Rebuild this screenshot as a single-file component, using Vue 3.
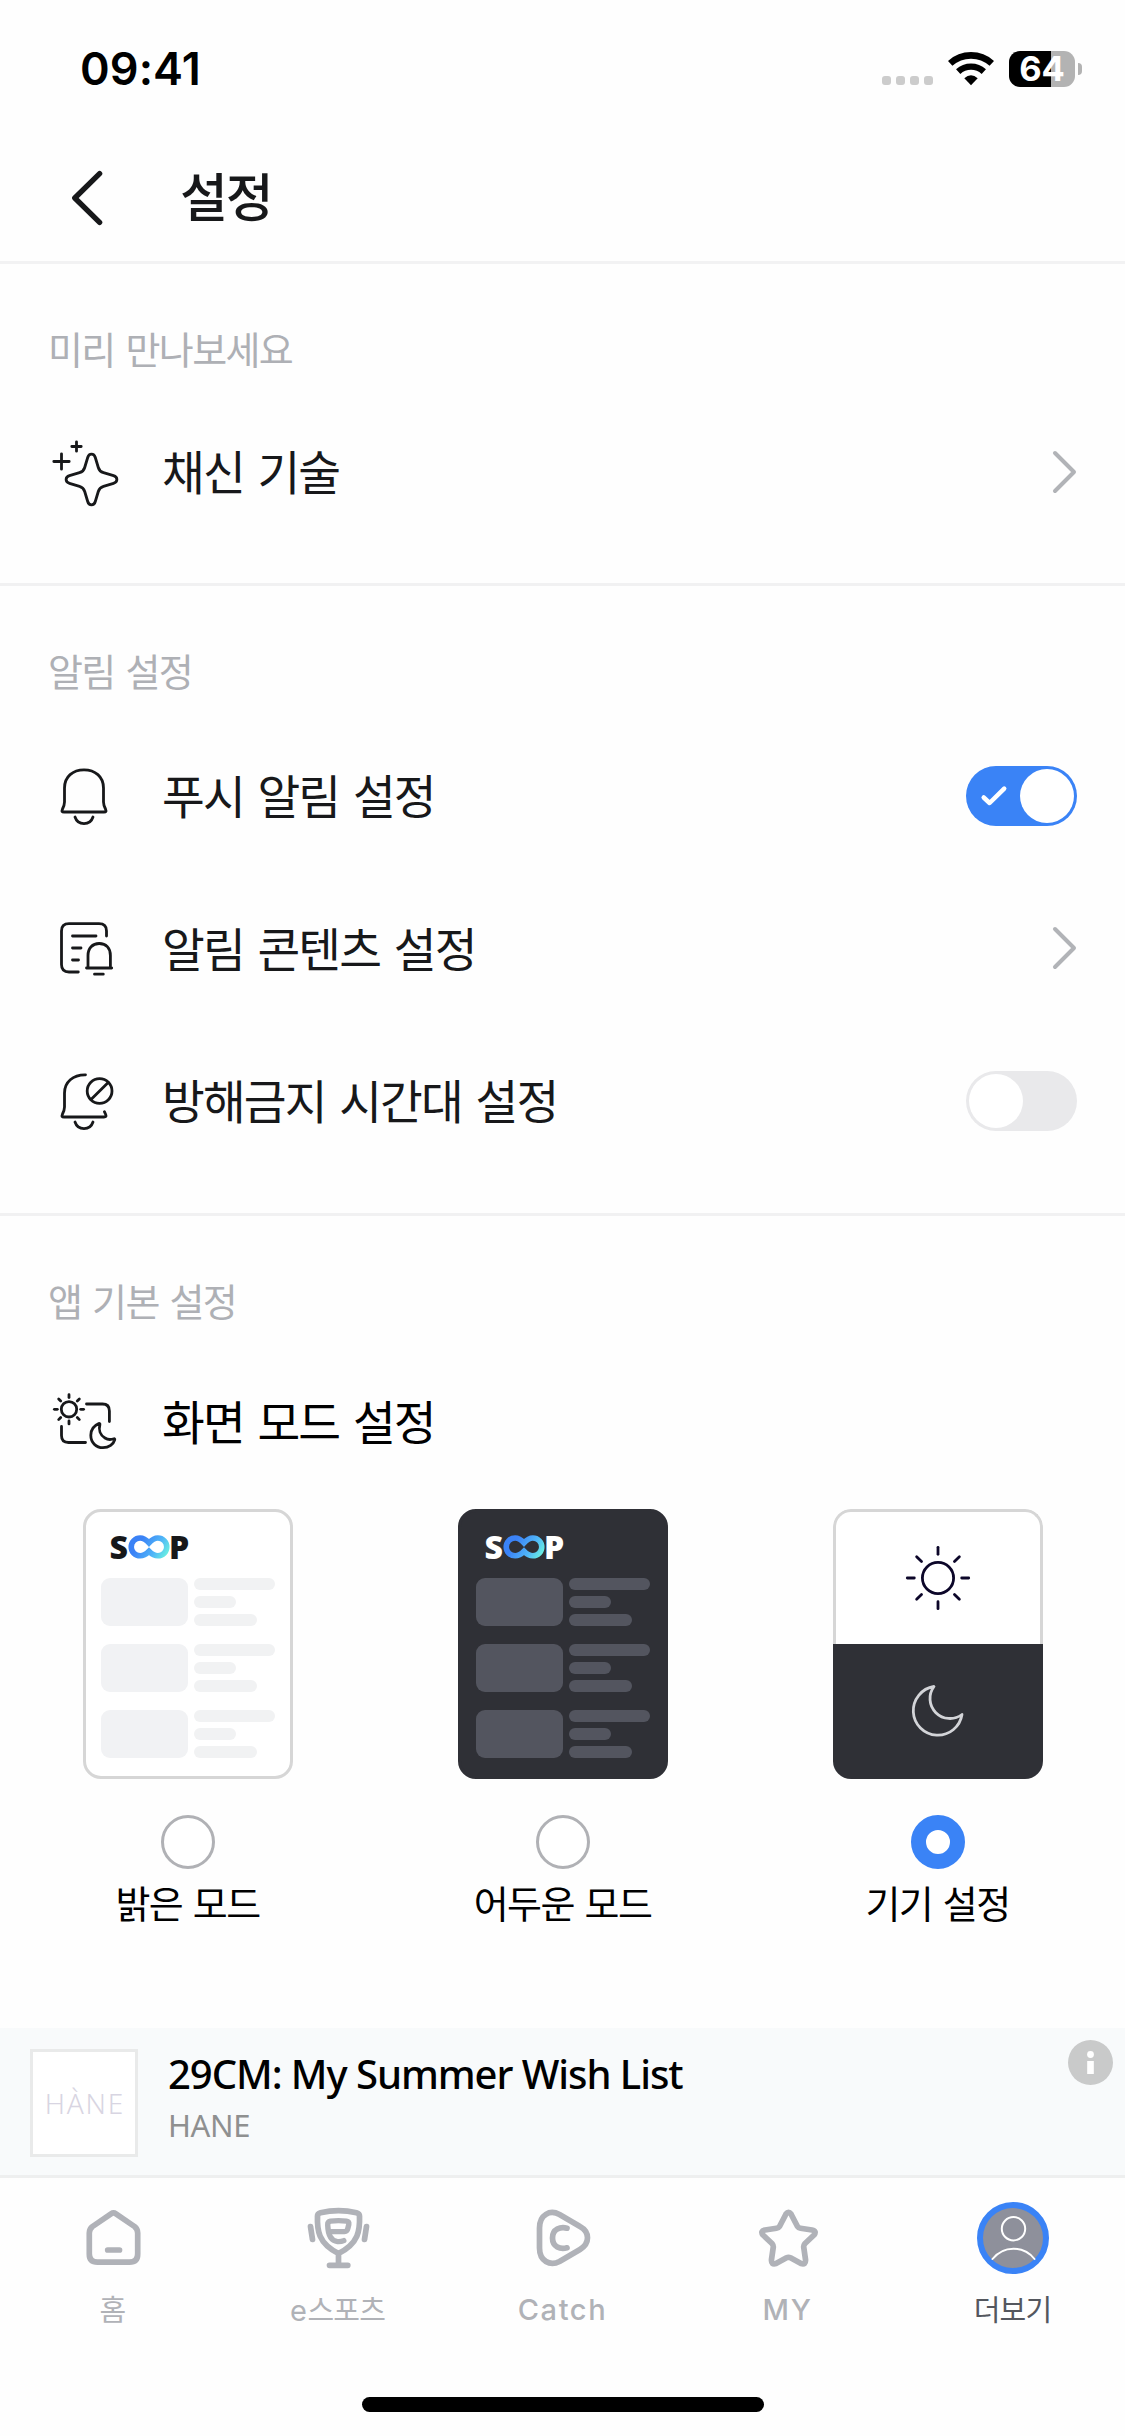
<script setup>
import { ref } from 'vue'

const pushOn = ref(true)
const quietOn = ref(false)
const mode = ref('device')

const modes = [
  { id: 'light', label: '밝은 모드' },
  { id: 'dark', label: '어두운 모드' },
  { id: 'device', label: '기기 설정' },
]
const rays = [0, 45, 90, 135, 180, 225, 270, 315]
</script>

<template>
  <div class="screen">
    <div class="status">
      <span class="clock">09:41</span>
      <div class="indicators">
        <div class="dots"><i v-for="n in 4" :key="n"></i></div>
        <svg class="wifi" width="46" height="34" viewBox="948 52 46 34">
          <path d="M950.2 63.4 A31 31 0 0 1 991.8 63.4" fill="none" stroke="#000" stroke-width="6.6" />
          <path d="M958.2 71.6 A19 19 0 0 1 983.8 71.6" fill="none" stroke="#000" stroke-width="6.4" />
          <path d="M964.3 78.3 Q971 72.3 977.7 78.3 L971 85.2Z" fill="#000" />
        </svg>
        <div class="battery"><span>64</span></div>
        <i class="battery-cap"></i>
      </div>
    </div>

    <header class="header">
      <svg class="back" width="40" height="60" viewBox="66 168 40 60">
        <path d="M99.6 173.6 L74.8 198 L99.6 222.4" />
      </svg>
      <h1>설정</h1>
    </header>

    <section class="section first">
      <h2>미리 만나보세요</h2>
      <div class="row">
        <svg class="icon" viewBox="48 436 72 72">
          <path d="M76.5 441.8 V451.2 M71.8 446.5 H81.2 M61.5 453.8 V469.2 M53.8 461.5 H69.2" />
          <path d="M87.7 457.5 C89 453 94 453 95.3 457.5 L98.3 467.5 C99 470 101 472 103.5 472.7 L113.5 475.7 C118 477 118 482 113.5 483.3 L103.5 486.3 C101 487 99 489 98.3 491.5 L95.3 501.5 C94 506 89 506 87.7 501.5 L84.7 491.5 C84 489 82 487 79.5 486.3 L69.5 483.3 C65 482 65 477 69.5 475.7 L79.5 472.7 C82 472 84 470 84.7 467.5 Z" />
        </svg>
        <span class="name">채신 기술</span>
        <svg class="chevron" width="26" height="44" viewBox="0 0 26 44"><path d="M4 3 L23 22 L4 41" /></svg>
      </div>
    </section>

    <section class="section second">
      <h2>알림 설정</h2>
      <div class="row">
        <svg class="icon" viewBox="48 759 72 72">
          <path d="M64.5 787 C64.5 775.5 73 768.8 84 768.8 C95 768.8 103.5 775.5 103.5 787 V801 C103.5 804 104.5 806 105.5 808 C106.5 810.5 106 811 104 811 H64 C62 811 61.5 810.5 62.5 808 C63.5 806 64.5 804 64.5 801 Z" />
          <path d="M75 816 C76.5 820.5 80 822.6 84 822.6 C88 822.6 91.5 820.5 93 816" />
        </svg>
        <span class="name">푸시 알림 설정</span>
        <button class="toggle" :class="{ on: pushOn }" @click="pushOn = !pushOn">
          <svg v-if="pushOn" class="check" width="30" height="24" viewBox="980 784 30 24"><path d="M983.7 797.5 L989.6 803 L1004.2 788.6" /></svg>
          <i></i>
        </button>
      </div>
      <div class="row">
        <svg class="icon" viewBox="48 912 72 72">
          <path d="M106.5 936 V931 Q106.5 923.7 99 923.7 H69 Q61.5 923.7 61.5 931 V964.5 Q61.5 972 69 972 H78.3" />
          <path d="M72.5 936 H96 M72.5 948 H81 M72.5 960 H78.5 M94.5 974.2 H103.3" />
          <path d="M88 967.5 V955.5 C88 948 92.5 943.5 99.2 943.5 C106 943.5 110.4 948 110.4 955.5 V967.5 M86.5 968 H111.7" />
        </svg>
        <span class="name">알림 콘텐츠 설정</span>
        <svg class="chevron" width="26" height="44" viewBox="0 0 26 44"><path d="M4 3 L23 22 L4 41" /></svg>
      </div>
      <div class="row">
        <svg class="icon" viewBox="48 1064 72 72">
          <path d="M85.5 1073.8 C73 1073.6 64.5 1081 64.5 1092 V1106 C64.5 1109 63.5 1111 62.5 1113 C61.5 1115.5 62 1116 64 1116 H104 C106 1116 106.5 1115.5 105.7 1113.5 L104.4 1110.7" />
          <path d="M75 1121 C76.5 1125.5 80 1127.6 84 1127.6 C88 1127.6 91.5 1125.5 93 1121" />
          <circle cx="99.6" cy="1090" r="12.4" />
          <path d="M91 1098.5 L108.2 1081.5" />
        </svg>
        <span class="name">방해금지 시간대 설정</span>
        <button class="toggle" :class="{ on: quietOn }" @click="quietOn = !quietOn"><i></i></button>
      </div>
    </section>

    <section class="section third">
      <h2>앱 기본 설정</h2>
      <div class="row">
        <svg class="icon" viewBox="48 1386 72 72">
          <circle cx="69" cy="1409.3" r="7.7" />
          <path v-for="a in rays" :key="a" d="M69 1394.7 V1397.6" :transform="`rotate(${a} 69 1409.3)`" />
          <path d="M86.5 1404 H102.5 Q109.4 1404 109.4 1411 V1421.5" />
          <path d="M61.5 1426.5 V1435.5 Q61.5 1442.5 68.5 1442.5 H85.5" />
          <path d="M98.8 1423.6 C93 1426 90.8 1431 90.8 1435.3 C90.8 1442.5 96 1447.7 103 1447.7 C109 1447.7 113.5 1444 114.7 1439.8 C115 1439 114.5 1438.5 113.8 1438.8 C111.5 1439.6 108 1440 105 1438 C100 1435 98.5 1429.5 99.9 1424.5 C100.1 1423.7 99.5 1423.3 98.8 1423.6Z" />
        </svg>
        <span class="name pure">화면 모드 설정</span>
      </div>

      <div class="modes">
        <div v-for="m in modes" :key="m.id" class="mode" @click="mode = m.id">
          <div class="card" :class="m.id">
            <template v-if="m.id !== 'device'">
              <div class="logo">
                <span>S</span>
                <svg width="42" height="24" viewBox="128.4 1535.3 42 24">
                  <defs>
                    <linearGradient :id="`loop-${m.id}`" gradientUnits="userSpaceOnUse" x1="142" y1="1540" x2="168" y2="1556">
                      <stop offset="0" stop-color="#3b82f6" />
                      <stop offset="0.55" stop-color="#4fb4f8" />
                      <stop offset="1" stop-color="#6bf3e0" />
                    </linearGradient>
                  </defs>
                  <path
                    d="M149.4 1543.2 C146.5 1540 144.5 1538.3 140.5 1538.3 A8.9 8.9 0 0 0 140.5 1556.1 C144.5 1556.1 146.5 1554.5 149.4 1551.5 C152.3 1554.5 154.3 1556.1 158.3 1556.1 A8.9 8.9 0 0 0 158.3 1538.3 C154.3 1538.3 152.3 1540 149.4 1543.2Z"
                    fill="none" :stroke="`url(#loop-${m.id})`" stroke-width="5.6" />
                </svg>
                <span class="tail">P</span>
              </div>
              <div v-for="n in 3" :key="n" class="skeleton">
                <div class="thumb"></div>
                <div class="lines"><i></i><i></i><i></i></div>
              </div>
            </template>
            <template v-else>
              <div class="half day">
                <svg width="72" height="72" viewBox="-36 -36 72 72">
                  <circle r="15.6" />
                  <path v-for="a in rays" :key="a" :d="a % 90 ? 'M0 -30.2 V-23.3' : 'M0 -30.7 V-23.7'" :transform="`rotate(${a})`" />
                </svg>
              </div>
              <div class="half night">
                <svg width="72" height="72" viewBox="902 1675.5 72 72">
                  <path d="M934 1686 A24.5 24.5 0 1 0 962 1714 A20 20 0 0 1 934 1686Z" />
                </svg>
              </div>
            </template>
          </div>
          <i class="radio" :class="{ checked: mode === m.id }"></i>
          <span class="mode-name">{{ m.label }}</span>
        </div>
      </div>
    </section>

    <aside class="ad">
      <div class="ad-thumb"><span>HÀNE</span></div>
      <div class="ad-text">
        <p class="ad-title">29CM: My Summer Wish List</p>
        <p class="ad-brand">HANE</p>
      </div>
      <svg class="info" width="45" height="45" viewBox="0 0 45 45">
        <circle cx="22.5" cy="22.5" r="22.5" fill="#c9caca" />
        <circle cx="22.5" cy="14.5" r="3.4" fill="#fff" />
        <rect x="19.2" y="21" width="6.6" height="13" fill="#fff" />
      </svg>
    </aside>

    <nav class="tabs">
      <div class="tab">
        <svg viewBox="76.5 2202 72 72">
          <path d="M110.5 2213.8 Q113 2212.1 115.5 2213.8 L134 2226.5 Q137.2 2229 137.2 2233 V2254 Q137.2 2262.2 129 2262.2 H97 Q88.8 2262.2 88.8 2254 V2233 Q88.8 2229 92 2226.5 Z M107.2 2250 H119" />
        </svg>
        <span>홈</span>
      </div>
      <div class="tab">
        <svg viewBox="301.5 2202 72 72">
          <path d="M317 2216 Q317 2213.5 320 2212.7 Q338 2208.7 356 2212.7 Q359 2213.5 359 2216 C359.5 2230 358.5 2243 338 2253.5 C317.5 2243 316.5 2230 317 2216Z M338 2254 V2264 M329 2265.3 H347.3 M310 2226.5 L312 2239.5 M366 2226.5 L364 2239.5" />
          <path class="thin" d="M331 2231.6 H344 Q346.7 2231.5 347.3 2228.5 L348.3 2224.5 Q348.7 2221.6 346 2221.2 Q338 2220 330 2221.2 Q327 2221.8 327.2 2225 Q327.6 2240.5 337 2241.6 Q340.5 2241.9 343.3 2240.6" />
        </svg>
        <span><b>e</b>스포츠</span>
      </div>
      <div class="tab">
        <svg viewBox="526.5 2202 72 72">
          <path d="M539 2228 C539 2214.5 549.5 2209.5 559 2214.5 L579.5 2226.5 C589.5 2232 589.5 2243.5 579.5 2249.5 L559 2261.5 C549.5 2266.5 539 2261 539 2248Z M566.5 2228.2 C560 2226.5 552 2229 552 2238 C552 2247 560 2249.7 566.5 2247.8" />
        </svg>
        <span class="latin">Catch</span>
      </div>
      <div class="tab">
        <svg viewBox="751.5 2202 72 72">
          <path d="M785.5 2214 Q788 2210.5 790.5 2214 L797 2226.5 Q798 2228 800 2228.3 L811.5 2230 Q816.5 2231 813.5 2235 L804.5 2243.5 Q803 2245.5 803.2 2247 L805 2259.5 Q805.5 2265 800.5 2263.5 L790 2257.8 Q788 2256.8 786 2257.8 L775.5 2263.5 Q770.5 2265 771 2259.5 L772.8 2247 Q773 2245.5 771.5 2243.5 L762.5 2235 Q759.5 2231 764.5 2230 L776 2228.3 Q778 2228 779 2226.5Z" />
        </svg>
        <span class="latin">MY</span>
      </div>
      <div class="tab active">
        <svg viewBox="976.5 2202 72 72">
          <circle cx="1012.5" cy="2238" r="33" fill="#8e909b" stroke="#3a83f6" stroke-width="6" />
          <circle cx="1013" cy="2228.7" r="11.7" stroke="#fff" stroke-width="2" />
          <path d="M992 2259 C998 2251.5 1005 2248.7 1013 2248.7 C1021 2248.7 1028 2251.5 1034 2259" stroke="#fff" stroke-width="2" />
        </svg>
        <span>더보기</span>
      </div>
    </nav>
    <div class="home-bar"><i></i></div>
  </div>
</template>

<style>
body {
  margin: 0;
  background: #fefefe;
}
</style>

<style scoped>
.screen {
  width: 1125px;
  height: 2436px;
  display: flex;
  flex-direction: column;
  background: #fefefe;
  color: #17181a;
  font-family: "Noto Sans CJK KR", "Noto Sans", sans-serif;
  overflow: hidden;
}
h1, h2, p { margin: 0; }
i { display: block; }

.status {
  height: 138px;
  flex: none;
  display: flex;
  justify-content: space-between;
  box-sizing: border-box;
  padding: 0 43px 0 80px;
}
.clock {
  height: 138px;
  line-height: 138px;
  font-family: Inter, sans-serif;
  font-weight: 600;
  font-size: 45px;
  letter-spacing: 0.1px;
  color: #000;
}
.indicators {
  height: 138px;
  display: flex;
  align-items: center;
}
.dots {
  display: flex;
  gap: 5px;
  margin: 23px 15px 0 0;
}
.dots i {
  width: 9px;
  height: 9px;
  border-radius: 3px;
  background: #ccc;
}
.battery {
  width: 66px;
  height: 36px;
  margin-left: 15px;
  border-radius: 11px;
  background: linear-gradient(90deg, #000 42px, #b3b3b3 42px);
  color: #fff;
  font: 700 34.5px/36px Inter, sans-serif;
  text-align: center;
}
.battery-cap {
  width: 4px;
  height: 12px;
  margin-left: 3px;
  border-radius: 0 5px 5px 0;
  background: #b3b3b3;
}

.header {
  height: 123px;
  flex: none;
  display: flex;
  align-items: center;
  padding-left: 66px;
  border-bottom: 3px solid #f2f2f3;
}
.back { margin-top: -3px; }
.back path {
  fill: none;
  stroke: #17181a;
  stroke-width: 5.4;
  stroke-linecap: round;
  stroke-linejoin: round;
}
h1 {
  margin: -9px 0 0 74px;
  font-size: 52px;
  font-weight: 500;
  line-height: 76px;
  letter-spacing: -2.2px;
}

.section {
  display: flex;
  flex-direction: column;
  flex: none;
  box-sizing: border-box;
}
.first { height: 322px; border-bottom: 3px solid #f1f1f2; }
.second { height: 630px; border-bottom: 3px solid #f1f1f2; }
.third { height: 812px; }
h2 {
  margin: 55px 0 0 48px;
  font-size: 38px;
  font-weight: 400;
  line-height: 58px;
  letter-spacing: -1.6px;
  word-spacing: 3.8px;
  color: #aeb0b5;
}
.row {
  height: 152.5px;
  flex: none;
  display: flex;
  align-items: center;
  padding: 0 48px;
}
.first .row { margin-top: 18.5px; }
.second .row:first-of-type { margin-top: 20.5px; }
.third .row { margin-top: 16.5px; }
.icon {
  width: 72px;
  height: 72px;
  fill: none;
  stroke: #17181a;
  stroke-width: 2.8;
  stroke-linecap: round;
  stroke-linejoin: round;
}
.name {
  flex: 1;
  margin: -3px 0 0 42px;
  font-size: 46.5px;
  line-height: 68px;
  letter-spacing: -1.9px;
  word-spacing: 5.2px;
}
.pure { color: #000; }
.chevron path {
  fill: none;
  stroke: #b1b3b7;
  stroke-width: 4;
  stroke-linecap: round;
  stroke-linejoin: round;
}
.toggle {
  width: 111px;
  height: 60px;
  display: flex;
  align-items: center;
  border: 0;
  padding: 0 3px;
  border-radius: 30px;
  background: #e9e9eb;
}
.toggle i {
  width: 54px;
  height: 54px;
  border-radius: 50%;
  background: #fff;
}
.toggle.on {
  background: #3a83f6;
  justify-content: flex-end;
}
.check {
  margin: 1px 10px 0 0;
}
.check path {
  fill: none;
  stroke: #fff;
  stroke-width: 4.5;
  stroke-linecap: round;
  stroke-linejoin: round;
}

.modes {
  display: flex;
  margin-top: 11px;
}
.mode {
  width: 375px;
  display: flex;
  flex-direction: column;
  align-items: center;
}
.card {
  width: 210px;
  height: 270px;
  box-sizing: border-box;
  border: 3px solid #d6d6d6;
  border-radius: 18px;
  background: #fff;
  color: #17181a;
  overflow: hidden;
}
.card.dark {
  background: #2f3036;
  border-color: #2f3036;
  color: #fff;
}
.logo {
  height: 24px;
  margin: 23px 0 19px 24px;
  display: flex;
  align-items: center;
}
.logo span {
  font: 800 32px/24px "Open Sans", sans-serif;
}
.logo .tail { margin-left: -1px; }
.skeleton {
  display: flex;
  gap: 6px;
  margin: 0 0 18px 15px;
}
.thumb {
  width: 87px;
  height: 48px;
  border-radius: 9px;
  background: #f1f2f4;
}
.lines {
  display: flex;
  flex-direction: column;
  gap: 6px;
}
.lines i {
  width: 81px;
  height: 12px;
  border-radius: 6px;
  background: #f1f2f3;
}
.lines i:nth-child(2) { width: 42px; }
.lines i:nth-child(3) { width: 63px; }
.dark .thumb, .dark .lines i { background: #53555f; }
.card.device {
  border: 0;
  display: flex;
  flex-direction: column;
}
.half {
  height: 135px;
  box-sizing: border-box;
  display: flex;
  align-items: center;
  justify-content: center;
  fill: none;
  stroke-linecap: round;
  stroke-linejoin: round;
  stroke-width: 2.8;
}
.day {
  border: 3px solid #d6d6d6;
  border-bottom: 0;
  border-radius: 18px 18px 0 0;
  stroke: #0c0629;
}
.night {
  background: #2f3036;
  stroke: #d3d4d8;
}
.radio {
  width: 54px;
  height: 54px;
  box-sizing: border-box;
  margin-top: 36px;
  border: 3px solid #b0b1b5;
  border-radius: 50%;
  background: #fff;
}
.radio.checked { border: 15px solid #3a83f6; }
.mode-name {
  margin-top: 4px;
  font-size: 38px;
  line-height: 58px;
  letter-spacing: -1.6px;
  word-spacing: 3.8px;
  color: #000;
}

.ad {
  height: 147px;
  flex: none;
  display: flex;
  background: #f8fafb;
  border-bottom: 3px solid #eeefef;
}
.ad-thumb {
  width: 108px;
  height: 108px;
  box-sizing: border-box;
  margin: 21px 0 0 30px;
  border: 3px solid #e9eaea;
  background: #fff;
  text-align: center;
}
.ad-thumb span {
  font: 300 28px/102px "Noto Sans", sans-serif;
  letter-spacing: 1.8px;
  margin-right: -1.8px;
  color: #d8d5e2;
}
.ad-text {
  flex: 1;
  margin: 18px 0 0 30px;
  font-family: "Noto Sans", sans-serif;
}
.ad-title {
  font-size: 40px;
  font-weight: 500;
  line-height: 56px;
  letter-spacing: -1.05px;
  white-space: nowrap;
  color: #000;
}
.ad-brand {
  margin-top: 1px;
  font-size: 31px;
  line-height: 44px;
  letter-spacing: -0.4px;
  color: #8f9090;
}
.info { margin: 12px 12px 0 0; }

.tabs {
  height: 180px;
  flex: none;
  display: flex;
}
.tab {
  width: 225px;
  display: flex;
  flex-direction: column;
  align-items: center;
  padding-top: 24px;
  color: #b0b2b7;
}
.tab svg {
  width: 72px;
  height: 72px;
  fill: none;
  stroke: #b0b2b8;
  stroke-width: 5.7;
  stroke-linecap: round;
  stroke-linejoin: round;
}
.tab .thin { stroke-width: 5.4; }
.tab span {
  margin-top: 12px;
  height: 44px;
  font-size: 29px;
  line-height: 44px;
  letter-spacing: -0.8px;
}
.tab b {
  font-family: Inter, sans-serif;
  font-weight: 400;
  letter-spacing: 0.5px;
}
.tab .latin {
  margin-top: 14px;
  font-family: Inter, "Noto Sans CJK KR", sans-serif;
  font-weight: 450;
  letter-spacing: 1.6px;
}
.active { color: #54575e; }

.home-bar {
  display: flex;
  justify-content: center;
  padding-top: 39px;
}
.home-bar i {
  width: 402px;
  height: 15px;
  border-radius: 8px;
  background: #000;
}
</style>
